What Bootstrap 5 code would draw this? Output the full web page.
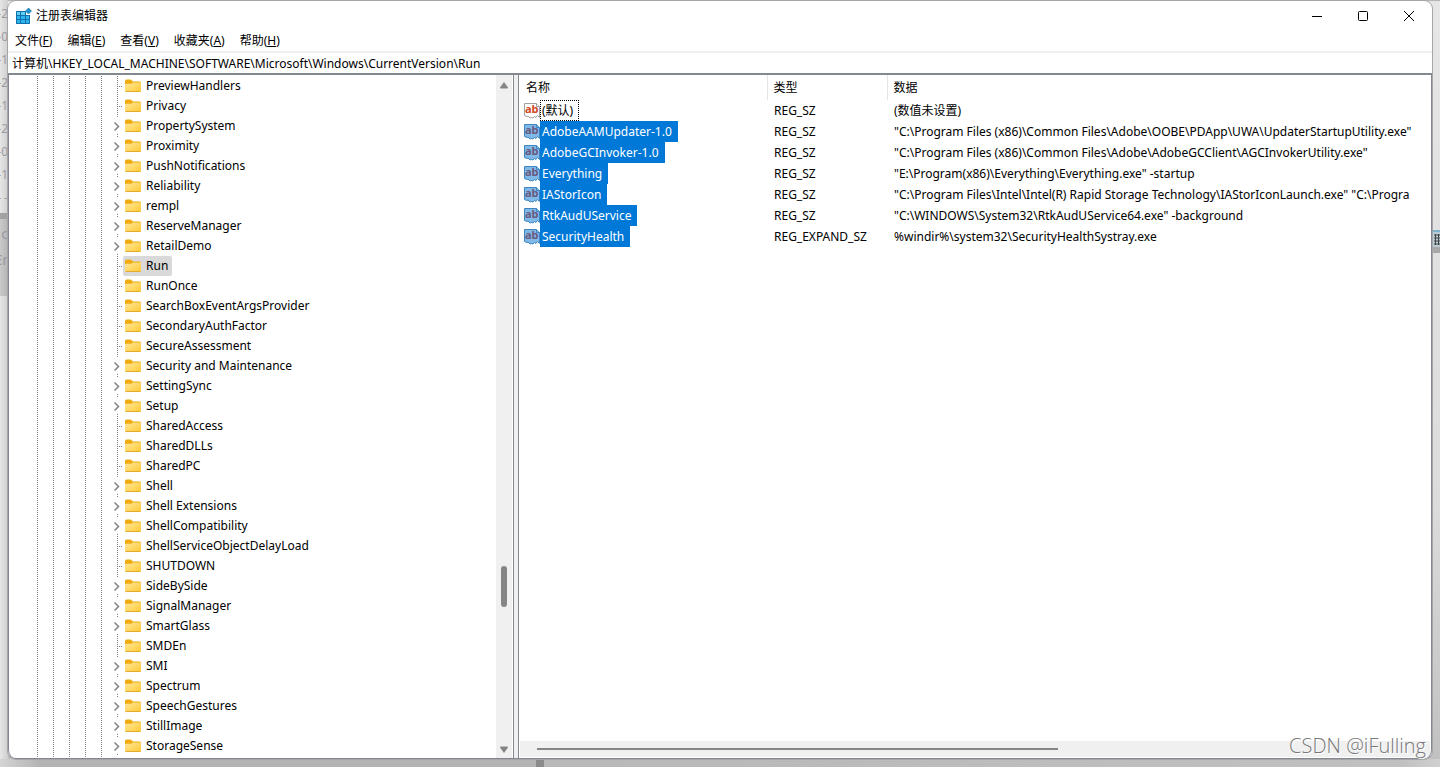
<!DOCTYPE html>
<html lang="zh-CN">
<head>
<meta charset="utf-8">
<meta name="viewport" content="width=device-width, initial-scale=1">
<title>注册表编辑器</title>
<link href="https://cdn.jsdelivr.net/npm/bootstrap@5.3.0/dist/css/bootstrap.min.css" rel="stylesheet">
<style>
  :root { --edge: #828790; --face: #f0f0f0; --dot: #808080; }
  body { font: 12px/20px "Noto Sans", "Noto Sans CJK SC", sans-serif; color: #000; background: #c0c0c0; }
  button, input { font: inherit; color: inherit; }
  h1 { font-size: 12px; }

  /* dimmed window behind the editor */
  .desktop { padding: 1px 8px 8px; background: linear-gradient(#b4b4b4 1px, transparent 1px), linear-gradient(#e6e6e6, #dcdcdc 500px, #c0c0c0); }
  .backdrop-left { width: 8px; left: 0; top: 0; line-height: 23px; color: #9a9aa0; background: linear-gradient(90deg, #e6e6e6, #cecece); white-space: nowrap; }
  .backdrop-left .upper { height: 211px; padding-top: 2px; border-bottom: 6px solid #a2a2a2; box-sizing: content-box; }
  .backdrop-left .lower { height: 77px; font-size: 14px; line-height: 26px; padding-top: 2px; background: linear-gradient(90deg, #cacaca, #b4b4b4); }
  .backdrop-right { width: 8px; right: 0; top: 230px; height: 23px; border-top: 2px solid #7fb4cf; border-bottom: 6px solid #a8a8a8; background: #b9ccd6; }
  .backdrop-bottom { height: 8px; left: 0; right: 0; bottom: 0; background: linear-gradient(90deg, #d4d4d4, #b4b4b4 40px, #b4b4b4 536px, #8a8a8a 536px, #8a8a8a 544px, #b8b8b8 544px, #c0c0c0 1400px, #d0d0d0); }

  .app-window { background: #fff; border-radius: 8px; box-shadow: 0 0 0 1px #a6a6a8; min-width: 0; }
  .title-bar { height: 30px; padding-left: 7px; }
  .title-bar button { width: 46px; border: 0; background: none; padding: 0; }
  .menu-bar { height: 20px; padding-left: 7px; gap: 15px; }
  .menu-bar button { border: 0; background: none; padding: 0; }
  .address { height: 22px; border: 0; border-top: 2px solid var(--face); padding: 0 4px; outline: 0; }
  .panes { border-top: 2px solid var(--edge); border-bottom: 1px solid var(--edge); background: var(--face); gap: 4px; min-height: 0; border-radius: 0 0 8px 8px; }
  .pane { background: #fff; border-right: 1px solid var(--edge); border-left: 1px solid var(--edge); min-height: 0; }
  .tree-pane { width: 506px; border-bottom-left-radius: 8px; }
  .list-pane { border-bottom-right-radius: 8px; }

  .tree { padding: 1px 0 0 101px; }
  .guides { left: 28px; top: 1px; bottom: 1px; width: 65px; }
  .guides i { width: 1px; background: repeating-linear-gradient(var(--dot) 0 1px, transparent 1px 2px); }
  .node { height: 20px; }
  .twist { width: 13px; height: 20px; }
  .node a { color: #000; text-decoration: none; padding: 0 4px 0 2px; gap: 5px; border-radius: 2px; line-height: 20px; }
  .node a.current { background: #d9d9d9; }

  .vbar { width: 17px; background: var(--face); border-right: 1px solid #fff; padding: 7px 0 5px; }
  .vbar .thumb { width: 6px; border-radius: 3px; background: #858585; }
  .hbar { height: 17px; background: var(--face); margin: 0 1px; padding: 0 17px; border-bottom: 1px solid #fff; }
  .hbar .thumb { height: 2px; background: #858585; }

  .values { table-layout: fixed; width: 100%; border-collapse: collapse; white-space: nowrap; line-height: 21px; }
  .values th { font-weight: 400; height: 25px; padding: 0 6px; border-right: 1px solid #e5e5e5; }
  .values th:last-child { border-right: 0; }
  .values td { height: 21px; padding: 0 0 0 7px; overflow: hidden; }
  .values td:first-child { padding-left: 5px; }
  .values th:first-child { padding-left: 7px; }
  .label-text { padding: 0 6px 0 2px; }
  .picked .label-text { background: #0078d7; color: #fff; }
  .focused { outline: 1px dotted #000; outline-offset: -1px; }

  .val { --sheet: #fff; --line: #a0a0a0; --ink: #d04a26; }
  .picked .val { --sheet: #7fb9e8; --line: #3f86c0; --ink: #6a5a80; }
  .sheet { fill: var(--sheet); stroke: var(--line); }
  .ab { fill: var(--ink); }
  .defs { width: 0; height: 0; }

  .watermark { right: 14px; bottom: 8px; font: 300 20px/26px "Open Sans", "Noto Sans", sans-serif; color: #777; text-shadow: 1px 1px 0 #fff; }
</style>
</head>
<body>
<svg class="defs position-absolute" aria-hidden="true">
  <defs>
    <linearGradient id="fold" x1="0" y1="0" x2="1" y2="1"><stop offset="0" stop-color="#ffe79a"/><stop offset="1" stop-color="#ffc933"/></linearGradient>
  </defs>
  <symbol id="folder" viewBox="0 0 16 14">
    <path d="M0 2a1.500 1.500 0 0 1 1.500-1.500H5.500q.6 0 1 .5L8 2.500H14.500A1.500 1.500 0 0 1 16 4v2H0z" fill="#f0ab10"/>
    <path d="M0 5.500q0-.8.8-.8H6.300L8 3.500H15q1 0 1 1V12q0 1-1 1H1q-1 0-1-1z" fill="url(#fold)"/>
    <path d="M.6 12.500H15.400" stroke="#e3ac30" stroke-width="1"/>
  </symbol>
  <symbol id="value-icon" viewBox="0 0 16 16">
    <path d="M.5.500H12.500L15.500 3.500V14.500L13.500 12.500 12 14.500 10.500 13.500 9 15 7.500 14.500 6 15 4 13 3 13.500.5 12.500z" class="sheet"/>
    <path d="M12.500.500V3.500H15.500" class="sheet"/>
    <text x="1" y="10" font-family="Noto Sans, sans-serif" font-size="11" font-weight="700" class="ab">ab</text>
  </symbol>
</svg>

<div class="desktop vh-100 d-flex position-relative overflow-hidden">
  <div class="backdrop-left position-absolute h-100 overflow-hidden" aria-hidden="true">
    <div class="upper d-flex flex-column align-items-end overflow-hidden"><span>3-2</span><span>5-0</span><span>7-1</span><span>3-2</span><span>0-1</span><span>2-2</span><span>2-0</span><span>5-1</span><span>- -</span></div>
    <div class="lower d-flex flex-column align-items-end overflow-hidden"><span>c</span><span>Er</span></div>
  </div>
  <div class="backdrop-right position-absolute" aria-hidden="true"><svg class="d-block" width="8" height="15"><path d="M2 3h6M2 6h6M2 9h6M2 12h6M3.500 2v11M6.500 2v11" stroke="#444"/></svg></div>
  <div class="backdrop-bottom position-absolute"></div>

  <main class="app-window position-relative flex-grow-1 d-flex flex-column">
    <header class="title-bar d-flex align-items-stretch">
      <div class="d-flex align-items-center gap-1 flex-grow-1">
        <svg width="17" height="17" viewBox="0 0 17 17"><path d="M1 3H11V7H15V16H1z" fill="#2cb5ee"/><path d="M1 3h9v4H1z" fill="#5fd0fa"/><path d="M1.500 3.500H10.500V7.500H14.500V15.500H1.500zM1 7.500H14M1 11.500H14M5.500 3V16M10.500 7V16" fill="none" stroke="#126fa8"/><path d="M13.500 0L16.500 3 13.500 6 10.500 3z" fill="#2390cc" stroke="#126fa8" stroke-width=".6"/></svg>
        <h1 class="m-0 fw-normal">注册表编辑器</h1>
      </div>
      <button type="button" aria-label="最小化"><svg width="12" height="12"><path d="M1 5.500H11" stroke="#000"/></svg></button>
      <button type="button" aria-label="最大化"><svg width="12" height="12"><rect x="1.500" y=".5" width="9" height="9" rx="1" fill="none" stroke="#000"/></svg></button>
      <button type="button" aria-label="关闭"><svg width="12" height="12"><path d="M1 0L11 10M11 0L1 10" stroke="#000"/></svg></button>
    </header>
    <nav class="menu-bar d-flex align-items-center">
      <button type="button">文件(<u>F</u>)</button>
      <button type="button">编辑(<u>E</u>)</button>
      <button type="button">查看(<u>V</u>)</button>
      <button type="button">收藏夹(<u>A</u>)</button>
      <button type="button">帮助(<u>H</u>)</button>
    </nav>
    <input class="address w-100" type="text" aria-label="地址" value="计算机\HKEY_LOCAL_MACHINE\SOFTWARE\Microsoft\Windows\CurrentVersion\Run">

    <div class="panes d-flex flex-grow-1">
      <section class="pane tree-pane flex-shrink-0 d-flex position-relative overflow-hidden">
        <div class="guides position-absolute d-flex justify-content-between"><i></i><i></i><i></i><i></i><i></i></div>
        <ul class="tree list-unstyled m-0 flex-grow-1 overflow-hidden" id="tree"></ul>
        <div class="vbar d-flex flex-column align-items-center">
          <svg width="8" height="7"><path d="M4 0L8 5.500Q8 6.500 7 6.500H1Q0 6.500 0 5.500z" fill="#858585"/></svg>
          <div style="flex:476 0 0"></div>
          <div class="thumb" style="flex:41 0 0"></div>
          <div style="flex:139 0 0"></div>
          <svg width="8" height="7"><path d="M4 7L8 1.500Q8 .5 7 .5H1Q0 .5 0 1.500z" fill="#858585"/></svg>
        </div>
      </section>

      <section class="pane list-pane flex-grow-1 d-flex flex-column overflow-hidden">
        <div class="flex-grow-1 overflow-hidden">
          <table class="values">
            <colgroup><col style="width:248px"><col style="width:120px"><col></colgroup>
            <thead><tr><th scope="col">名称</th><th scope="col">类型</th><th scope="col">数据</th></tr></thead>
            <tbody id="values"></tbody>
          </table>
        </div>
        <div class="hbar d-flex align-items-center">
          <div class="thumb" style="flex:522 0 0"></div>
          <div style="flex:355 0 0"></div>
        </div>
      </section>
    </div>
  </main>
  <div class="watermark position-absolute">CSDN @iFulling</div>
</div>

<script src="https://cdn.jsdelivr.net/npm/bootstrap@5.3.0/dist/js/bootstrap.bundle.min.js"></script>
<script>
  // A leading "+" marks a key that has subkeys.
  const keys = ["PreviewHandlers", "Privacy", "+PropertySystem", "+Proximity", "+PushNotifications", "+Reliability",
    "+rempl", "+ReserveManager", "+RetailDemo", "Run", "RunOnce", "SearchBoxEventArgsProvider", "SecondaryAuthFactor",
    "SecureAssessment", "+Security and Maintenance", "+SettingSync", "+Setup", "SharedAccess", "SharedDLLs", "SharedPC",
    "+Shell", "+Shell Extensions", "+ShellCompatibility", "ShellServiceObjectDelayLoad", "SHUTDOWN", "+SideBySide",
    "+SignalManager", "+SmartGlass", "SMDEn", "+SMI", "+Spectrum", "+SpeechGestures", "+StillImage", "+StorageSense"];
  const leaf = '<path d="M7.500 0V20" stroke="#808080" stroke-dasharray="1 1"/><path d="M9 10.500H13" stroke="#808080" stroke-dasharray="1 1"/>';
  const branch = '<path d="M7.500 0V2M7.500 18V20" stroke="#808080" stroke-dasharray="1 1"/><path d="M4.500 6.500L8.500 10.500 4.500 14.500" fill="none" stroke="#868686" stroke-width="1.600"/>';
  document.getElementById("tree").innerHTML = keys.map(k => {
    const sub = k[0] === "+", name = sub ? k.slice(1) : k;
    return `<li class="node d-flex"><svg class="twist flex-shrink-0">${sub ? branch : leaf}</svg>` +
      `<a href="#" class="d-flex align-items-center${name === "Run" ? " current" : ""}"><svg width="16" height="14"><use href="#folder"/></svg>${name}</a></li>`;
  }).join("");

  const values = [
    ["(默认)", "REG_SZ", "(数值未设置)"],
    ["AdobeAAMUpdater-1.0", "REG_SZ", String.raw`"C:\Program Files (x86)\Common Files\Adobe\OOBE\PDApp\UWA\UpdaterStartupUtility.exe"`],
    ["AdobeGCInvoker-1.0", "REG_SZ", String.raw`"C:\Program Files (x86)\Common Files\Adobe\AdobeGCClient\AGCInvokerUtility.exe"`],
    ["Everything", "REG_SZ", String.raw`"E:\Program(x86)\Everything\Everything.exe" -startup`],
    ["IAStorIcon", "REG_SZ", String.raw`"C:\Program Files\Intel\Intel(R) Rapid Storage Technology\IAStorIconLaunch.exe" "C:\Progra`],
    ["RtkAudUService", "REG_SZ", String.raw`"C:\WINDOWS\System32\RtkAudUService64.exe" -background`],
    ["SecurityHealth", "REG_EXPAND_SZ", String.raw`%windir%\system32\SecurityHealthSystray.exe`]
  ];
  document.getElementById("values").innerHTML = values.map((v, i) =>
    `<tr class="${i ? "picked" : ""}"><td><div class="d-flex align-items-center"><svg class="val flex-shrink-0" width="16" height="16"><use href="#value-icon"/></svg>` +
    `<span class="label-text${i ? "" : " focused"}">${v[0]}</span></div></td><td>${v[1]}</td><td>${v[2]}</td></tr>`).join("");
</script>
</body>
</html>
